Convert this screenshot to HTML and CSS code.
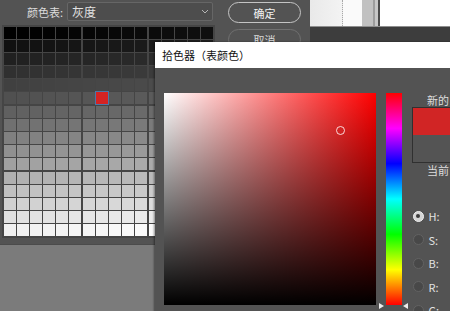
FILE: index.html
```html
<!DOCTYPE html>
<html lang="zh-CN">
<head>
<meta charset="utf-8">
<title>拾色器</title>
<link rel="stylesheet" href="styles.css">
</head>
<body>
<div class="desk">
  <div class="bgwin">
    <div class="bgwin-top">
      <div class="seg seg-a"></div>
      <div class="seg seg-b"></div>
      <div class="seg seg-c"></div>
      <div class="seg seg-d"></div>
      <div class="seg seg-e"></div>
      <div class="seg seg-f"></div>
      <div class="seg seg-g"></div>
    </div>
    <div class="bgwin-bar"></div>
  </div>

  <div class="table-dlg">
    <div class="tbl-main">
      <div class="tbl-head">
        <span class="lbl">颜色表:</span>
        <div class="select">
          <span class="select-text">灰度</span>
          <svg class="chev" width="8" height="5" viewBox="0 0 8 5"><polyline points="1,1 4,4 7,1" fill="none" stroke="#b5b5b5" stroke-width="1"/></svg>
        </div>
      </div>
      <div class="swatch-grid" id="grid"></div>
    </div>
    <div class="tbl-btns">
      <div class="btn btn-default">确定</div>
      <div class="btn">取消</div>
    </div>
  </div>

  <div class="picker">
    <div class="pk-title">拾色器（表颜色）</div>
    <div class="pk-body">
      <div class="field">
        <div class="field-mark"></div>
      </div>
      <div class="hue-wrap">
        <div class="hue"></div>
        <div class="arrow arrow-l"></div>
        <div class="arrow arrow-r"></div>
      </div>
      <div class="pk-side">
        <div class="side-lbl">新的</div>
        <div class="cmp">
          <div class="cmp-new"></div>
          <div class="cmp-cur"></div>
        </div>
        <div class="side-lbl">当前</div>
        <div class="modes">
          <div class="mode"><span class="radio on"></span><span class="mode-lbl">H:</span></div>
          <div class="mode"><span class="radio"></span><span class="mode-lbl">S:</span></div>
          <div class="mode"><span class="radio"></span><span class="mode-lbl">B:</span></div>
          <div class="mode"><span class="radio"></span><span class="mode-lbl">R:</span></div>
          <div class="mode"><span class="radio"></span><span class="mode-lbl">G:</span></div>
        </div>
      </div>
    </div>
  </div>
</div>
<script src="script.js"></script>
</body>
</html>
```

FILE: styles.css
```css
* { box-sizing: border-box; }
html, body { margin: 0; padding: 0; }
body {
  width: 450px;
  height: 311px;
  overflow: hidden;
  font-family: "Noto Sans CJK SC", "Noto Sans", sans-serif;
  font-size: 11px;
}
.desk {
  position: relative;
  width: 450px;
  height: 311px;
  overflow: hidden;
  background: #7b7b7b;
}

/* background window, top right */
.bgwin {
  position: absolute;
  left: 310px;
  top: 0;
  width: 140px;
  height: 42px;
  display: flex;
  flex-direction: column;
}
.bgwin-top {
  display: flex;
  height: 27px;
  border-bottom: 1px solid #8e8e8e;
}
.seg { height: 100%; }
.seg-a { width: 33px; background: linear-gradient(to right, #e9e9e9, #f3f3f3); border-right: 1px dotted #a8a8a8; }
.seg-b { width: 19px; background: #fafafa; }
.seg-c { width: 11px; background: #c1c1c1; }
.seg-d { width: 2px; background: #9c9c9c; }
.seg-e { width: 3px; background: #c6c6c6; }
.seg-f { width: 2px; background: #4a4a4a; }
.seg-g { flex: 1; background: #ffffff; }
.bgwin-bar { flex: 1; background: #3d3d3d; }

/* color table dialog */
.table-dlg {
  position: absolute;
  left: 0;
  top: 0;
  width: 310px;
  height: 245px;
  background: #535353;
  border-bottom: 1px solid #4b4b4b;
  display: flex;
}
.tbl-main {
  width: 215px;
  padding-left: 2px;
  display: flex;
  flex-direction: column;
}
.tbl-head {
  height: 25px;
  display: flex;
  align-items: center;
}
.lbl {
  margin-left: 25px;
  color: #dcdcdc;
  font-size: 11px;
  margin-top: -1px;
}
.select {
  margin-left: auto;
  margin-right: 2px;
  margin-top: -3px;
  width: 146px;
  height: 19px;
  border: 1px solid #666;
  border-radius: 2px;
  background: #4d4d4d;
  display: flex;
  align-items: center;
  padding: 0 3px 0 4px;
}
.select-text {
  color: #e2e2e2;
  font-size: 12px;
}
.chev { margin-left: auto; }

.swatch-grid {
  display: grid;
  grid-template-columns: repeat(16, 12px);
  grid-auto-rows: 12px;
  gap: 1.2px;
  padding: 1.5px;
  background: #454545;
  width: 213px;
}
.cell { width: 12px; height: 12px; }
.cell-sel {
  background: #d42323;
  outline: 1px solid #4a76a8;
}

.tbl-btns {
  padding-left: 13px;
  padding-top: 2px;
  display: flex;
  flex-direction: column;
  gap: 6px;
}
.btn {
  width: 73px;
  height: 21px;
  border: 1px solid #707070;
  border-radius: 11px;
  color: #dadada;
  font-size: 11px;
  display: flex;
  align-items: center;
  justify-content: center;
}
.btn-default {
  border-color: #c4c4c4;
  color: #f2f2f2;
}

/* color picker dialog */
.picker {
  position: absolute;
  left: 155px;
  top: 42px;
  width: 320px;
  height: 280px;
  background: #535353;
  box-shadow: -1px 0 2px rgba(0, 0, 0, 0.45);
  display: flex;
  flex-direction: column;
}
.pk-title {
  height: 26px;
  background: #ffffff;
  color: #111;
  font-size: 11px;
  line-height: 26px;
  padding-left: 7px;
}
.pk-body {
  flex: 1;
  display: flex;
  align-items: flex-start;
  padding: 25px 0 0 9px;
}
.field {
  position: relative;
  flex: none;
  width: 212px;
  height: 212px;
  background:
    linear-gradient(to top, #000 0%, rgba(0, 0, 0, 0) 100%),
    linear-gradient(to right, #fff 0%, #f00 100%);
}
.field-mark {
  position: absolute;
  left: 171.5px;
  top: 32.5px;
  width: 9px;
  height: 9px;
  border: 1px solid rgba(255, 235, 235, 0.9);
  border-radius: 50%;
}
.hue-wrap {
  position: relative;
  flex: none;
  margin-left: 10px;
  width: 16px;
  height: 212px;
}
.hue {
  width: 16px;
  height: 212px;
  background: linear-gradient(to top, #f00 0%, #ff0 16.67%, #0f0 33.33%, #0ff 50%, #00f 66.67%, #f0f 83.33%, #f00 100%);
}
.arrow {
  position: absolute;
  bottom: -4px;
  width: 0;
  height: 0;
  border-top: 3.5px solid transparent;
  border-bottom: 3.5px solid transparent;
}
.arrow-l { left: -7px; border-left: 5px solid #ececec; }
.arrow-r { left: 17px; border-right: 5px solid #ececec; }

.pk-side {
  flex: none;
  margin-left: 10px;
  width: 80px;
  display: flex;
  flex-direction: column;
  color: #dedede;
}
.side-lbl {
  padding-left: 15px;
  line-height: 14px;
  font-size: 11px;
}
.cmp {
  width: 60px;
  height: 56px;
  border: 1px solid #303030;
  display: flex;
  flex-direction: column;
}
.cmp-new { flex: 1; background: #d12525; }
.cmp-cur { flex: 1; background: #545454; }
.modes {
  margin-top: 33px;
  display: flex;
  flex-direction: column;
  gap: 11.5px;
}
.mode {
  height: 12px;
  display: flex;
  align-items: center;
  gap: 5px;
}
.radio {
  position: relative;
  flex: none;
  width: 11px;
  height: 11px;
  margin-left: 0.5px;
  border-radius: 50%;
  border: 1px solid #626262;
  background: #484848;
}
.radio.on {
  background: #d4d4d4;
  border-color: #f0f0f0;
}
.radio.on::after {
  content: "";
  position: absolute;
  left: 2.5px;
  top: 2.5px;
  width: 4px;
  height: 4px;
  border-radius: 50%;
  background: #3a3a3a;
}
.mode-lbl {
  font-size: 11px;
  color: #e2e2e2;
}
```

FILE: script.js
```js
(function () {
  var grid = document.getElementById('grid');
  for (var i = 0; i < 256; i++) {
    var d = document.createElement('div');
    d.className = 'cell';
    if (i === 87) {
      d.classList.add('cell-sel');
    } else {
      d.style.background = 'rgb(' + i + ',' + i + ',' + i + ')';
    }
    grid.appendChild(d);
  }
})();
```
